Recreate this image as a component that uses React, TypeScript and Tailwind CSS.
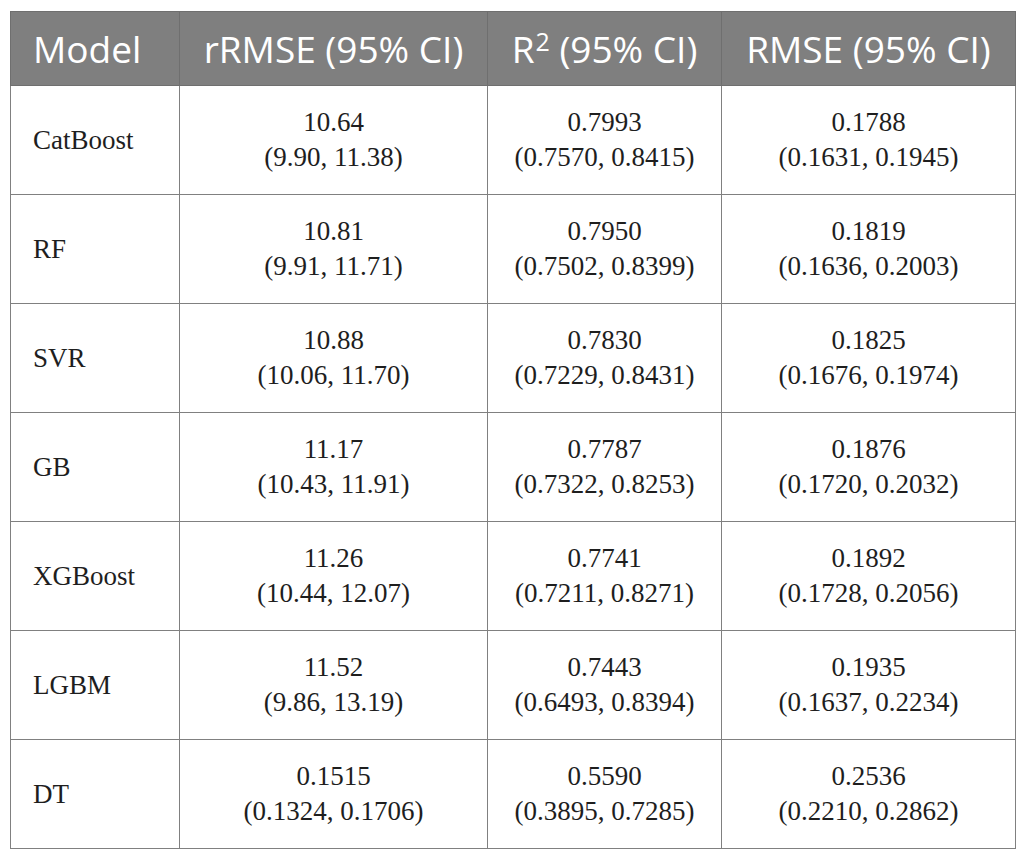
import React from "react";

const rows: [string, string, string, string, string, string, string][] = [
  ["CatBoost", "10.64", "(9.90, 11.38)", "0.7993", "(0.7570, 0.8415)", "0.1788", "(0.1631, 0.1945)"],
  ["RF", "10.81", "(9.91, 11.71)", "0.7950", "(0.7502, 0.8399)", "0.1819", "(0.1636, 0.2003)"],
  ["SVR", "10.88", "(10.06, 11.70)", "0.7830", "(0.7229, 0.8431)", "0.1825", "(0.1676, 0.1974)"],
  ["GB", "11.17", "(10.43, 11.91)", "0.7787", "(0.7322, 0.8253)", "0.1876", "(0.1720, 0.2032)"],
  ["XGBoost", "11.26", "(10.44, 12.07)", "0.7741", "(0.7211, 0.8271)", "0.1892", "(0.1728, 0.2056)"],
  ["LGBM", "11.52", "(9.86, 13.19)", "0.7443", "(0.6493, 0.8394)", "0.1935", "(0.1637, 0.2234)"],
  ["DT", "0.1515", "(0.1324, 0.1706)", "0.5590", "(0.3895, 0.7285)", "0.2536", "(0.2210, 0.2862)"],
];

export default function App() {
  return (
    <div className="w-[1025px] h-[857px] bg-white pt-[11px] pl-[10px]">
      <table className="border-collapse table-fixed w-[1005px] text-[#1e1e1e]">
        <colgroup>
          <col className="w-[169px]" />
          <col className="w-[308px]" />
          <col className="w-[234px]" />
          <col className="w-[294px]" />
        </colgroup>
        <thead>
          <tr className="h-[74px] bg-[#7f7f7f] text-white text-[37px] font-['Open_Sans',sans-serif] leading-none">
            <th className="border border-[#6f6f6f] text-left font-normal pl-[22px]">Model</th>
            <th className="border border-[#6f6f6f] text-center font-normal">rRMSE (95% CI)</th>
            <th className="border border-[#6f6f6f] text-center font-normal">
              R<sup className="text-[25px] top-[-12px] ml-[1px]">2</sup> (95% CI)
            </th>
            <th className="border border-[#6f6f6f] text-center font-normal">RMSE (95% CI)</th>
          </tr>
        </thead>
        <tbody className="font-['Liberation_Serif',serif] text-[27px] leading-[35px]">
          {rows.map((r) => (
            <tr key={r[0]} className="h-[109px]">
              <td className="border border-[#808080] pl-[22px] align-middle">{r[0]}</td>
              <td className="border border-[#808080] text-center align-middle">
                <div>{r[1]}</div>
                <div>{r[2]}</div>
              </td>
              <td className="border border-[#808080] text-center align-middle">
                <div>{r[3]}</div>
                <div>{r[4]}</div>
              </td>
              <td className="border border-[#808080] text-center align-middle">
                <div>{r[5]}</div>
                <div>{r[6]}</div>
              </td>
            </tr>
          ))}
        </tbody>
      </table>
    </div>
  );
}
